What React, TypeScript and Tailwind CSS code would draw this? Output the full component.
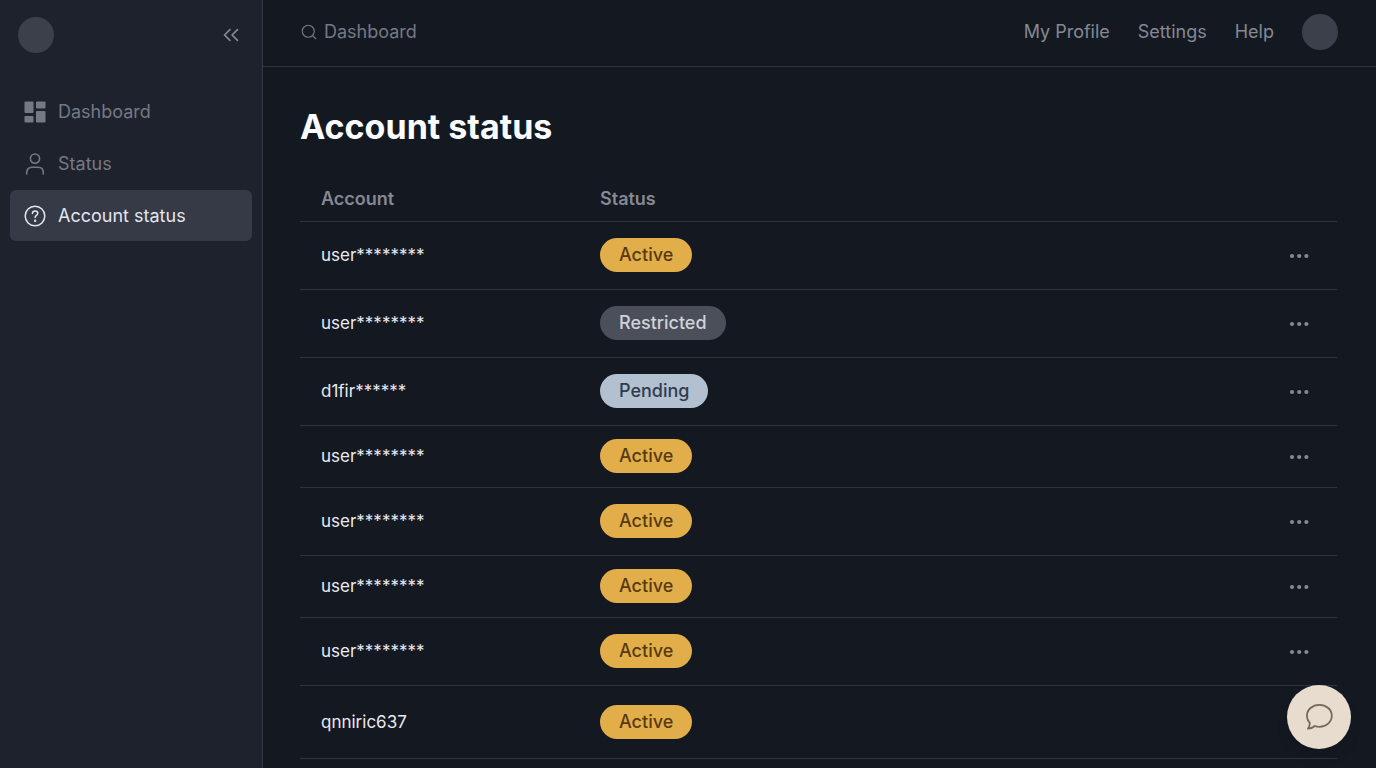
import React from 'react';
import { ChevronsLeft, Search } from 'lucide-react';

type Status = 'Active' | 'Restricted' | 'Pending';
type RowSize = 'normal' | 'compact' | 'tall';

interface Account {
  id: number;
  name: string;
  status: Status;
  size: RowSize;
}

const accounts: Account[] = [
  { id: 1, name: 'user********', status: 'Active', size: 'normal' },
  { id: 2, name: 'user********', status: 'Restricted', size: 'normal' },
  { id: 3, name: 'd1fir******', status: 'Pending', size: 'normal' },
  { id: 4, name: 'user********', status: 'Active', size: 'compact' },
  { id: 5, name: 'user********', status: 'Active', size: 'normal' },
  { id: 6, name: 'user********', status: 'Active', size: 'compact' },
  { id: 7, name: 'user********', status: 'Active', size: 'normal' },
  { id: 8, name: 'qnniric637', status: 'Active', size: 'tall' },
];

const statusStyles: Record<Status, string> = {
  Active: 'bg-[#e2ae4a] text-[#573a10]',
  Restricted: 'bg-[#4b4f59] text-[#d0d3da]',
  Pending: 'bg-[#b2c0d0] text-[#2f3c50]',
};

const rowStyles: Record<RowSize, string> = {
  normal: 'h-[68px]',
  compact: 'h-[62px]',
  tall: 'h-[73px]',
};

const DashboardIcon = () => (
  <svg width="22" height="22" viewBox="0 0 22 22" fill="currentColor" aria-hidden="true">
    <rect x="0.5" y="0.5" width="9" height="11.5" rx="1" />
    <rect x="12" y="0.5" width="9.5" height="7" rx="1" />
    <rect x="0.5" y="15" width="9" height="6.5" rx="1" />
    <rect x="12" y="10" width="9.5" height="11.5" rx="1" />
  </svg>
);

const PersonIcon = () => (
  <svg width="22" height="22" viewBox="0 0 22 22" fill="none" stroke="currentColor" strokeWidth="1.6" strokeLinecap="round" aria-hidden="true">
    <circle cx="11" cy="5.6" r="4.6" />
    <path d="M2.7 21v-1.6c0-3.2 2.2-5.2 5.2-5.2h6.2c3 0 5.2 2 5.2 5.2V21" />
  </svg>
);

const HelpIcon = () => (
  <svg width="22" height="22" viewBox="0 0 22 22" fill="none" stroke="currentColor" strokeWidth="1.5" strokeLinecap="round" strokeLinejoin="round" aria-hidden="true">
    <circle cx="11" cy="11" r="9.8" />
    <path d="M8.4 8.4c.1-1.5 1.2-2.5 2.7-2.5 1.6 0 2.7 1 2.7 2.4 0 2-2.7 2.2-2.7 4.2" />
    <circle cx="11.1" cy="15.8" r="0.5" fill="currentColor" />
  </svg>
);

const ChatIcon = () => (
  <svg width="28" height="28" viewBox="0 0 28 28" fill="none" stroke="currentColor" strokeWidth="1.8" strokeLinejoin="round" aria-hidden="true">
    <path d="M14.4 1.8c7 0 12.4 4.8 12.4 11s-5.4 11-12.4 11c-1.6 0-3.1-.3-4.5-.8-1.8 1.600-4.300 2.700-7 2.700 1.300-1.700 2-3.600 1.900-5.500C3 18.200 1.900 15.700 1.900 12.800c0-6.200 5.500-11 12.500-11z" />
  </svg>
);

const MoreIcon = () => (
  <svg width="20" height="6" viewBox="0 0 20 6" fill="currentColor" aria-hidden="true">
    <circle cx="3" cy="3" r="2.1" />
    <circle cx="10.200" cy="3" r="2.1" />
    <circle cx="17.400" cy="3" r="2.1" />
  </svg>
);

const navItems = [
  { label: 'Dashboard', icon: <DashboardIcon />, active: false },
  { label: 'Status', icon: <PersonIcon />, active: false },
  { label: 'Account status', icon: <HelpIcon />, active: true },
];

const Sidebar: React.FC = () => (
  <aside className="w-[263px] shrink-0 bg-[#1e222d] border-r border-[#343842]">
    <div className="flex items-center justify-between pl-[18px] pr-[18px] pt-[17px]">
      <div className="size-9 rounded-full bg-[#3c404b]" />
      <button type="button" aria-label="Collapse sidebar" className="text-[#868a94]">
        <ChevronsLeft size={26} strokeWidth={1.5} />
      </button>
    </div>
    <nav className="mt-[33px] px-[10px] flex flex-col gap-px">
      {navItems.map((item) => (
        <a
          key={item.label}
          href="#"
          aria-current={item.active ? 'page' : undefined}
          className={`flex items-center gap-3 h-[51px] px-[14px] rounded-md ${
            item.active ? 'bg-[#353a46] text-[#e3e6ed]' : 'text-[#757984]'
          }`}
        >
          {item.icon}
          <span>{item.label}</span>
        </a>
      ))}
    </nav>
  </aside>
);

const Header: React.FC = () => (
  <header className="flex items-center justify-between h-[67px] pl-[37px] pr-[38px] pb-0.5 border-b border-[#2f333e] text-[#757984]">
    <label className="flex items-center gap-1.5">
      <Search size={18} strokeWidth={1.5} />
      <input
        type="text"
        aria-label="Search"
        placeholder="Dashboard"
        className="w-64 bg-transparent outline-none placeholder:text-[#757984] placeholder:opacity-100"
      />
    </label>
    <nav className="flex items-center gap-7 text-[#858994]">
      <a href="#">My Profile</a>
      <a href="#">Settings</a>
      <a href="#">Help</a>
      <button type="button" aria-label="Account menu" className="size-9 rounded-full bg-[#3c404b]" />
    </nav>
  </header>
);

const App: React.FC = () => {
  return (
    <div className="flex min-h-screen bg-[#141820] font-['Inter',sans-serif] text-[18px] leading-6">
      <Sidebar />
      <div className="flex-1 min-w-0">
        <Header />
        <main className="pl-[37px] pr-[39px] pt-10">
          <h1 className="text-[34px] leading-10 font-bold text-[#fafbfd]">Account status</h1>
          <table className="w-full mt-[30px] text-left border-collapse">
            <thead>
              <tr className="h-11 border-b border-[#2f333e] text-[#858994]">
                <th className="w-[300px] pl-[21px] font-semibold">Account</th>
                <th className="font-semibold">Status</th>
                <th aria-label="Actions" />
              </tr>
            </thead>
            <tbody>
              {accounts.map((account) => (
                <tr key={account.id} className={`border-b border-[#2f333e] ${rowStyles[account.size]}`}>
                  <td className="pl-[21px] text-[17px] text-[#e8eaf0]">{account.name}</td>
                  <td>
                    <span className={`inline-flex items-center h-[34px] px-[19px] rounded-full font-medium ${statusStyles[account.status]}`}>
                      {account.status}
                    </span>
                  </td>
                  <td className="pr-7 text-right">
                    <button type="button" aria-label="More actions" className="inline-flex align-middle text-[#858994]">
                      <MoreIcon />
                    </button>
                  </td>
                </tr>
              ))}
            </tbody>
          </table>
        </main>
      </div>
      <button
        type="button"
        aria-label="Open chat"
        className="fixed right-[25px] bottom-[19px] size-16 rounded-full bg-[#e8dccf] text-[#75695e] flex items-center justify-center shadow-lg"
      >
        <ChatIcon />
      </button>
    </div>
  );
};

export default App;
